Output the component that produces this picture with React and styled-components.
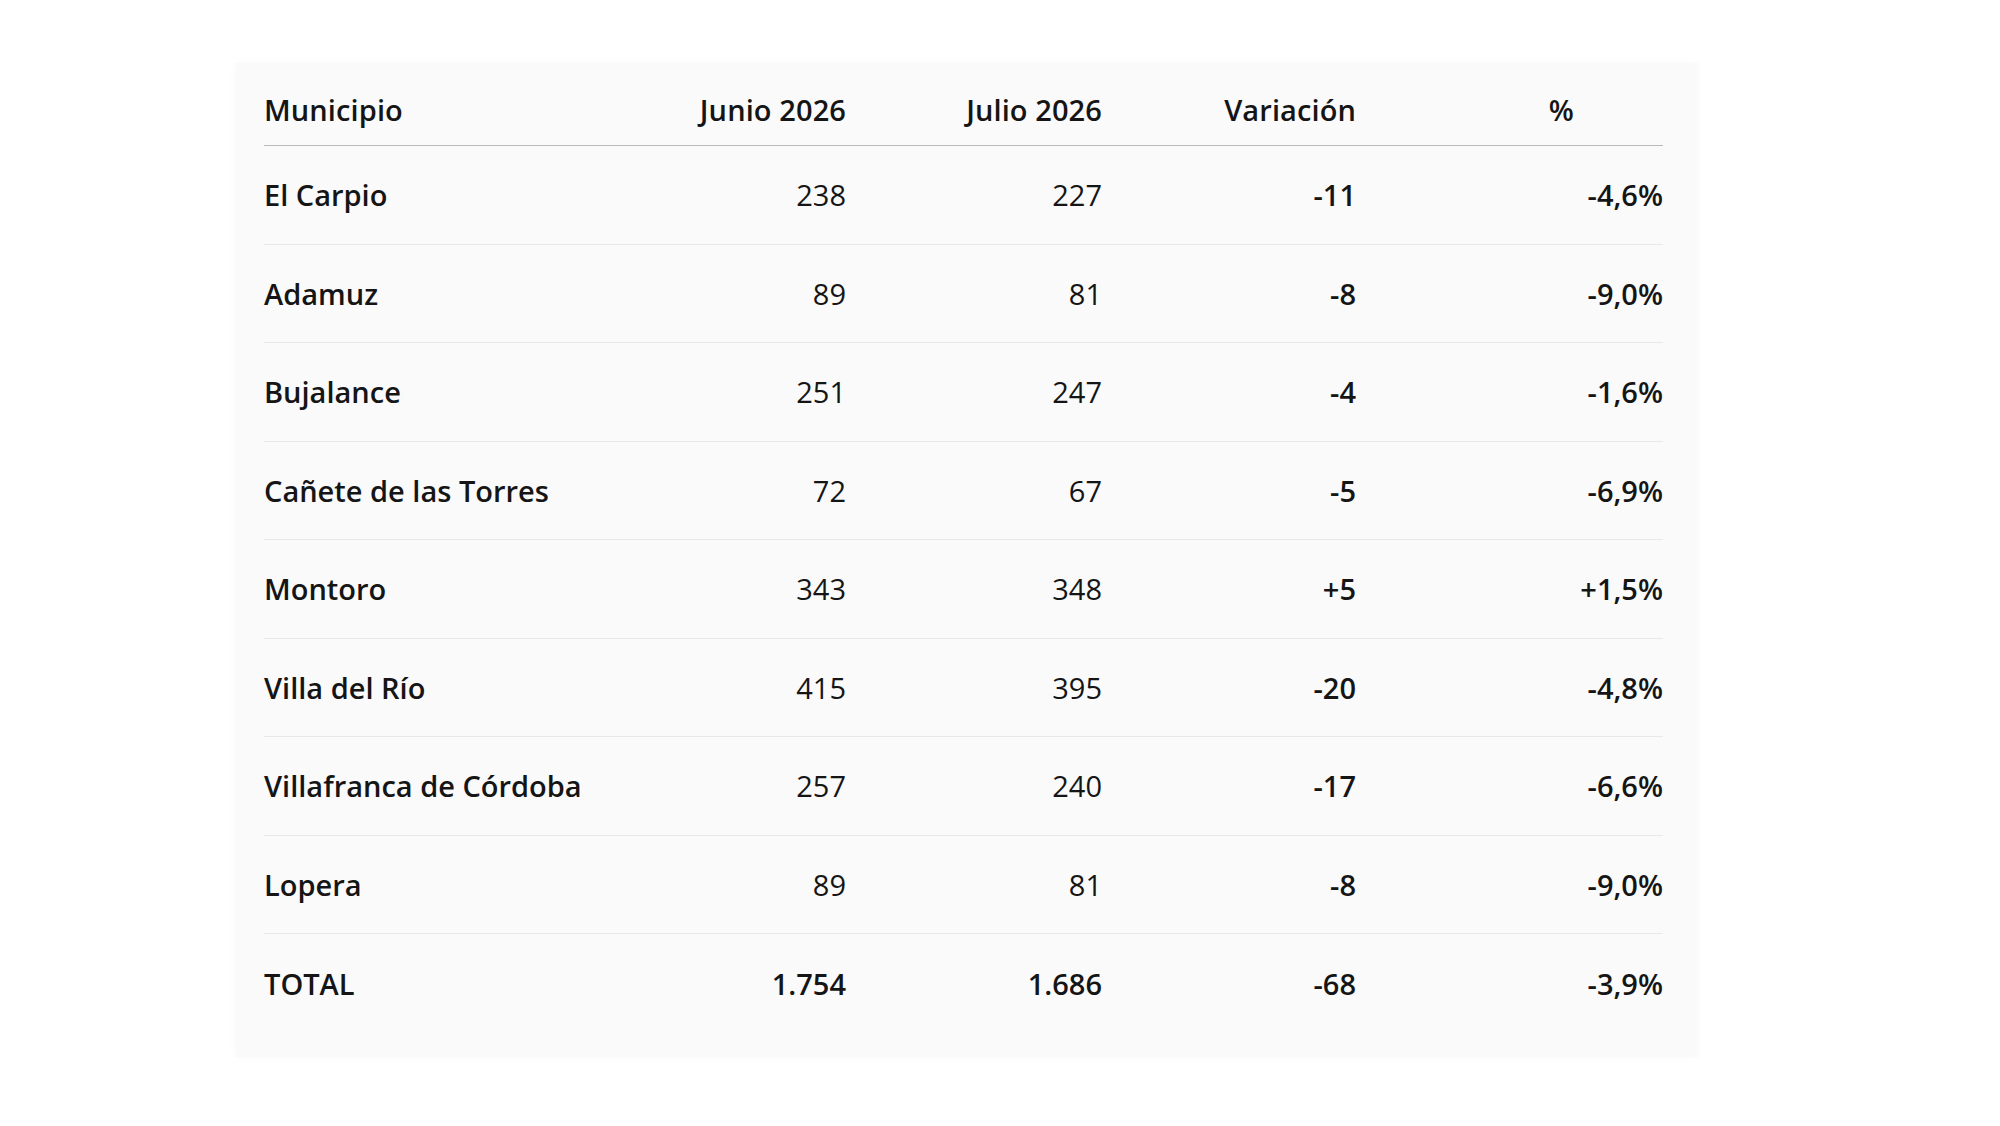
import React from "react";
import styled, { createGlobalStyle } from "styled-components";

const GlobalStyle = createGlobalStyle`
  html, body {
    margin: 0;
    padding: 0;
    background: #ffffff;
  }
  body {
    font-family: "Open Sans", "Noto Sans", "Liberation Sans", sans-serif;
    color: #141414;
  }
`;

const Page = styled.div`
  min-height: 1126px;
  box-sizing: border-box;
  padding: 63px 0 0 235px;
  background: #ffffff;
`;

const Card = styled.div`
  width: 1463px;
  box-sizing: border-box;
  padding: 0 35px 25px 29px;
  background: #fafafa;
  box-shadow: 0 0 10px rgba(0, 0, 0, 0.025);
`;

const Table = styled.div`
  display: grid;
  grid-template-columns: 326px 256px 256px 254px 307px;
`;

const Row = styled.div`
  display: contents;
`;

const HeadCell = styled.div`
  height: 83px;
  box-sizing: border-box;
  display: flex;
  align-items: center;
  justify-content: ${(p) => (p.$align === "left" ? "flex-start" : "flex-end")};
  padding-top: 10px;
  padding-right: ${(p) => p.$pr || 0}px;
  border-bottom: 1px solid #b9b9b9;
  font-size: 29px;
  font-weight: 600;
  letter-spacing: 0.1px;
  color: #151515;
  white-space: nowrap;
`;

const Cell = styled.div`
  height: ${(p) => (p.$last ? 98 : 98.5)}px;
  box-sizing: border-box;
  display: flex;
  align-items: center;
  justify-content: ${(p) => (p.$align === "left" ? "flex-start" : "flex-end")};
  border-bottom: ${(p) => (p.$last ? "none" : "1px solid #e8e8e8")};
  font-size: 29px;
  font-weight: ${(p) => p.$weight || 400};
  letter-spacing: 0;
  color: #151515;
  white-space: nowrap;
`;

const rows = [
  ["El Carpio", "238", "227", "-11", "-4,6%"],
  ["Adamuz", "89", "81", "-8", "-9,0%"],
  ["Bujalance", "251", "247", "-4", "-1,6%"],
  ["Cañete de las Torres", "72", "67", "-5", "-6,9%"],
  ["Montoro", "343", "348", "+5", "+1,5%"],
  ["Villa del Río", "415", "395", "-20", "-4,8%"],
  ["Villafranca de Córdoba", "257", "240", "-17", "-6,6%"],
  ["Lopera", "89", "81", "-8", "-9,0%"],
];

const total = ["TOTAL", "1.754", "1.686", "-68", "-3,9%"];

export default function App() {
  return (
    <>
      <GlobalStyle />
      <Page>
        <Card>
          <Table>
            <Row>
              <HeadCell $align="left">Municipio</HeadCell>
              <HeadCell>Junio 2026</HeadCell>
              <HeadCell>Julio 2026</HeadCell>
              <HeadCell>Variación</HeadCell>
              <HeadCell $pr={89}>%</HeadCell>
            </Row>
            {rows.map((r) => (
              <Row key={r[0]}>
                <Cell $align="left" $weight={600}>{r[0]}</Cell>
                <Cell>{r[1]}</Cell>
                <Cell>{r[2]}</Cell>
                <Cell $weight={600}>{r[3]}</Cell>
                <Cell $weight={600}>{r[4]}</Cell>
              </Row>
            ))}
            <Row>
              <Cell $align="left" $weight={600} $last>{total[0]}</Cell>
              <Cell $weight={600} $last>{total[1]}</Cell>
              <Cell $weight={600} $last>{total[2]}</Cell>
              <Cell $weight={600} $last>{total[3]}</Cell>
              <Cell $weight={600} $last>{total[4]}</Cell>
            </Row>
          </Table>
        </Card>
      </Page>
    </>
  );
}
